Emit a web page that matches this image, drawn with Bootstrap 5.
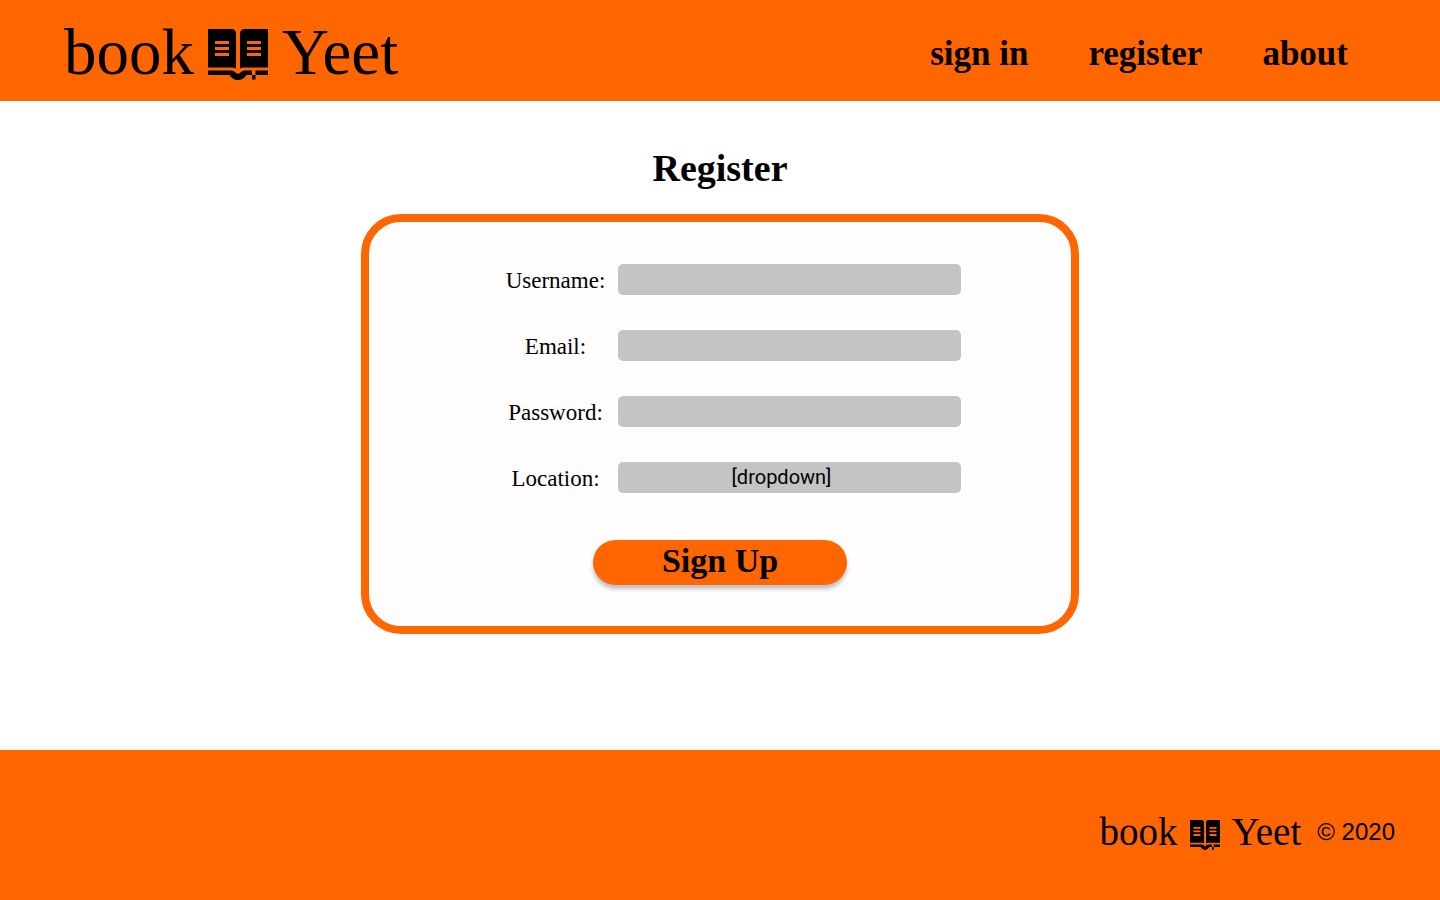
<!DOCTYPE html>
<html lang="en">
<head>
<meta charset="utf-8">
<meta name="viewport" content="width=device-width, initial-scale=1">
<title>book Yeet – Register</title>
<link href="https://cdn.jsdelivr.net/npm/bootstrap@5.3.0/dist/css/bootstrap.min.css" rel="stylesheet">
<style>
  :root { --brand: #ff6600; --serif: "Liberation Serif", serif; }
  body { font-family: var(--serif); color: #000; background: #fff; }
  .brand-bg { background: var(--brand); }
  .site-header { min-height: 101px; padding: 2px 92px 0 64px; }
  .site-footer { min-height: 150px; padding: 14px 45px 0 64px; }
  .logo, .logo:hover { color: #000; text-decoration: none; font-size: 65px; line-height: 72px; gap: 14px; }
  .logo svg { width: 60px; height: 51px; margin-top: 5px; }
  .logo.logo-sm { font-size: 39px; line-height: 44px; gap: 12px; }
  .logo.logo-sm svg { width: 30px; height: 30px; margin-top: 6px; }
  .main-links { gap: 60px; padding-top: 4px; }
  .main-links .nav-link { color: #000; padding: 0; font-weight: 700; font-size: 34px; line-height: 40px; }
  .main-links .nav-link { font-size: 35px; }
  .copyright { font: 24px/32px "Liberation Sans", sans-serif; }
  .page-title { font-size: 38px; line-height: 44px; font-weight: 700; margin: 45px 0 24px; }
  .register-card { width: 100%; max-width: 718px; border: 8px solid var(--brand); border-radius: 40px; background: #fffdfe; padding: 42px 16px 41px; color: #000; }
  .fields { gap: 35px; margin-left: 26px; }
  .field-row { gap: 12px; }
  .field-row label { width: 101px; font-size: 23px; line-height: 31px; padding-top: 2px; text-align: center; white-space: nowrap; }
  .field-row { height: 31px; }
  .field-row .form-control, .field-row .form-select { width: 343px; min-width: 0; height: 31px; min-height: 0; padding: 0 8px; border: 0; border-radius: 5px; background: #c4c4c4; color: #000; }
  .field-row .form-select { font: 20px/31px Roboto, sans-serif; text-align: center; text-align-last: center; padding: 0 16px 0 0; }
  .btn-signup, .btn-signup:hover { width: 254px; height: 45px; margin-top: 47px; padding: 0 0 3px; border: 0; border-radius: 23px; background: var(--brand); color: #000; font-weight: 700; font-size: 34px; line-height: 42px; box-shadow: 0 4px 4px rgba(0, 0, 0, .25); }
</style>
</head>
<body class="d-flex flex-column min-vh-100">
<svg class="d-none" aria-hidden="true">
  <symbol id="book" viewBox="0 0 60 51" preserveAspectRatio="none">
    <path fill-rule="evenodd" d="M0 0H23Q28 0 28 5V39.500Q26 38.500 23 38.500H0ZM7 12V15H21V12ZM7 18V21H21V18ZM7 24V27H21V24Z"/>
    <path fill-rule="evenodd" d="M60 0H37Q32 0 32 5V39.500Q34 38.500 37 38.500H60ZM39 12V15H53V12ZM39 18V21H53V18ZM39 24V27H53V24Z"/>
    <path d="M0 41.500H23Q26 41.500 27.500 43.500Q30 46 32.500 43.500Q34 41.500 37 41.500H44V46H38.500Q35.500 51 30 51T21.500 46H0ZM47.500 41.500H60V46H47.500ZM44 46H47.500V50.500H44Z"/>
  </symbol>
</svg>

<header class="site-header brand-bg d-flex flex-wrap align-items-center justify-content-between">
  <a class="logo d-flex align-items-center" href="#"><span>book</span><svg role="img" aria-label="Open book"><use href="#book"/></svg><span>Yeet</span></a>
  <nav class="nav main-links">
    <a class="nav-link" href="#">sign in</a>
    <a class="nav-link" href="#">register</a>
    <a class="nav-link" href="#">about</a>
  </nav>
</header>

<main class="flex-grow-1 d-flex flex-column align-items-center px-3 pb-5">
  <h1 class="page-title">Register</h1>
  <form class="register-card d-flex flex-column align-items-center">
    <div class="fields d-flex flex-column">
      <div class="field-row d-flex align-items-center"><label for="username">Username:</label><input class="form-control" id="username" type="text"></div>
      <div class="field-row d-flex align-items-center"><label for="email">Email:</label><input class="form-control" id="email" type="email"></div>
      <div class="field-row d-flex align-items-center"><label for="password">Password:</label><input class="form-control" id="password" type="password"></div>
      <div class="field-row d-flex align-items-center"><label for="location">Location:</label><select class="form-select" id="location"><option>[dropdown]</option></select></div>
    </div>
    <button class="btn btn-signup" type="submit">Sign Up</button>
  </form>
</main>

<footer class="site-footer brand-bg d-flex flex-wrap align-items-center justify-content-end gap-3">
  <a class="logo logo-sm d-flex align-items-center" href="#"><span>book</span><svg role="img" aria-label="Open book"><use href="#book"/></svg><span>Yeet</span></a>
  <span class="copyright">© 2020</span>
</footer>
<script src="https://cdn.jsdelivr.net/npm/bootstrap@5.3.0/dist/js/bootstrap.bundle.min.js"></script>
</body>
</html>
